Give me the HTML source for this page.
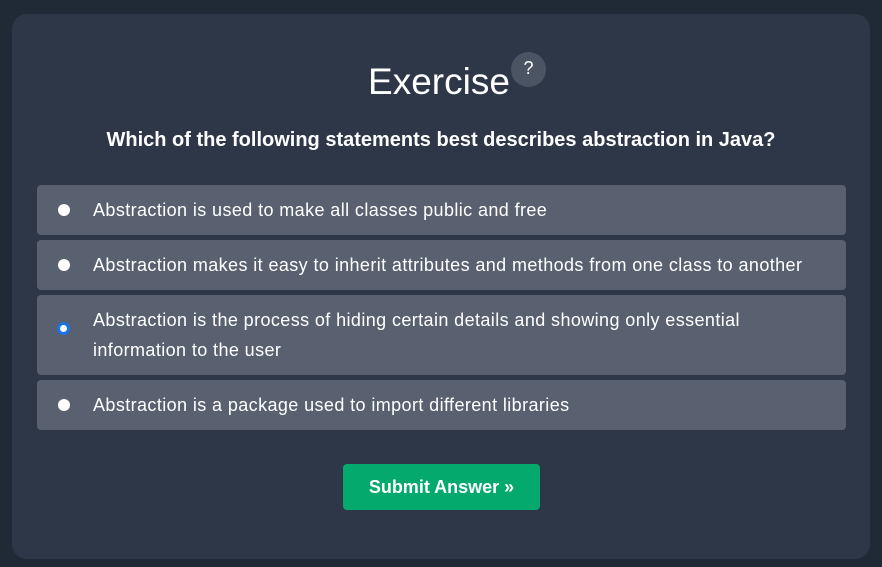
<!DOCTYPE html>
<html><head><style>
body{margin:0;background:#1f2a36;width:882px;height:567px;overflow:hidden;font-family:"Liberation Sans",sans-serif;color:#fff;position:relative}
.card{position:absolute;left:12px;top:14px;width:858px;height:545px;background:#2d3748;border-radius:15px}
.t{position:absolute;left:0;width:882px;text-align:center}
.opt{position:absolute;left:37px;width:809px;background:#596170;border-radius:4px}
.r{position:absolute;left:58px;width:12px;height:12px;border-radius:50%;background:#fff}
.txt{position:absolute;left:93px;font-size:18px;line-height:30px;letter-spacing:0.4px}
</style></head><body>
<div class="card"></div>
<div class="t" style="top:58px;font-size:37px;line-height:48px;left:-2px">Exercise</div>
<div style="position:absolute;left:511px;top:52px;width:35px;height:35px;border-radius:50%;background:#4b5463;font-size:18px;line-height:33px;text-align:center">?</div>
<div class="t" style="top:127px;font-size:20px;font-weight:bold;line-height:26px">Which of the following statements best describes abstraction in Java?</div>
<div class="opt" style="top:185px;height:50px"></div>
<div class="opt" style="top:240px;height:50px"></div>
<div class="opt" style="top:295px;height:80px"></div>
<div class="opt" style="top:380px;height:50px"></div>
<div class="r" style="top:204px"></div>
<div class="r" style="top:259px"></div>
<div class="r" style="top:322px;left:57px;width:7px;height:7px;background:#fff;border:3px solid #1a73e8"></div>
<div class="r" style="top:399px"></div>
<div class="txt" style="top:195px">Abstraction is used to make all classes public and free</div>
<div class="txt" style="top:250px">Abstraction makes it easy to inherit attributes and methods from one class to another</div>
<div class="txt" style="top:305px">Abstraction is the process of hiding certain details and showing only essential<br>information to the user</div>
<div class="txt" style="top:390px">Abstraction is a package used to import different libraries</div>
<div style="position:absolute;left:343px;top:464px;width:197px;height:46px;background:#04aa6d;border-radius:4px;font-size:18px;font-weight:bold;line-height:46px;text-align:center">Submit Answer »</div>
</body></html>
